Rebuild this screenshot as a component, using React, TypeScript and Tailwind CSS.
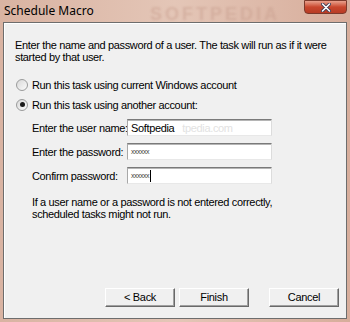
import React from 'react'

const Radio = ({ checked }: { checked?: boolean }) => (
    <span className="relative inline-flex items-center justify-center w-[12px] h-[12px] rounded-full border border-[#9a9b9b] bg-gradient-to-br from-[#d8d8d8] to-[#fbfbfb]">
        {checked && <span className="w-[5px] h-[5px] rounded-full bg-[#1a1a1a]" />}
    </span>
)

const Field = ({ label, children }: { label: string; children: React.ReactNode }) => (
    <div className="flex items-center h-[17px]">
        <span className="w-[95px] shrink-0 whitespace-nowrap">{label}</span>
        <div className="w-[145px] h-[17px] bg-white border border-t-[#7a7a7a] border-l-[#a8a8a8] border-r-[#dcdcdc] border-b-[#e8e8e8] shadow-[inset_0_1px_0_#b5b5b5] flex items-center px-[3px] overflow-hidden">
            {children}
        </div>
    </div>
)

const Btn = ({ children }: { children: React.ReactNode }) => (
    <button className="w-[70px] h-[19px] bg-[#f0f0f0] border border-t-white border-l-white border-r-[#696969] border-b-[#696969] shadow-[inset_-1px_-1px_0_#a0a0a0] text-[11px] leading-none text-black tracking-[-0.3px]">
        {children}
    </button>
)

export default function App() {
    return (
        <div
            className="w-[350px] h-[322px] overflow-hidden bg-gradient-to-r from-[#d9b3a2] via-[#e4c6b7] to-[#d7ad9b] flex flex-col"
            style={{ fontFamily: '"Liberation Sans", Arial, sans-serif' }}
        >
            {/* Title bar */}
            <div className="relative h-[22px] shrink-0 flex items-center pl-[4px]">
                <span className="text-[12px] text-black" style={{ fontFamily: '"Noto Sans", "Open Sans", sans-serif' }}>
                    Schedule Macro
                </span>
                <span className="absolute left-[150px] top-[1px] text-[18px] font-bold tracking-[3px] text-[#c9a090]/50 blur-[1px]">
                    SOFTPEDIA
                </span>
                <div className="absolute right-[3px] top-0 w-[43px] h-[14px] rounded-b-[4px] border border-[#7c3a2c] bg-gradient-to-b from-[#e8a08c] via-[#c9472e] to-[#b83c25] flex items-center justify-center">
                    <svg width="10" height="9" viewBox="0 0 10 9">
                        <path d="M1.5 1 L8.5 8 M8.5 1 L1.5 8" stroke="#3b3b55" strokeWidth="3.2" strokeLinecap="round" />
                        <path d="M1.5 1 L8.5 8 M8.5 1 L1.5 8" stroke="#ffffff" strokeWidth="1.6" strokeLinecap="round" />
                    </svg>
                </div>
            </div>

            {/* Client area */}
            <div className="mx-[3px] h-[297px] bg-[#f0f0f0] border border-[#6d6d6d] shadow-[inset_1px_1px_0_#ffffff] flex flex-col text-[11px] leading-[12px] tracking-[-0.35px] text-black pl-[11px]">
                <p className="mt-[16px] pr-[6px]">
                    Enter the name and password of a user. The task will run as if it were started by that user.
                </p>

                <div className="mt-[15px] flex items-center gap-[4px] pl-[1px] h-[13px]">
                    <Radio />
                    <span>Run this task using current Windows account</span>
                </div>
                <div className="mt-[7px] flex items-center gap-[4px] pl-[1px] h-[13px]">
                    <Radio checked />
                    <span>Run this task using another account:</span>
                </div>

                <div className="mt-[8px] pl-[17px] flex flex-col gap-[7px]">
                    <Field label="Enter the user name:">
                        <span>Softpedia</span>
                        <span className="ml-[8px] text-[#e2e2e2] whitespace-nowrap">tpedia.com</span>
                    </Field>
                    <Field label="Enter the password:">
                        <span className="text-[7px] tracking-[-0.5px] text-[#444]">xxxxxx</span>
                    </Field>
                    <Field label="Confirm password:">
                        <span className="text-[7px] tracking-[-0.5px] text-[#444]">xxxxxx</span>
                        <span className="w-px h-[12px] bg-black ml-[1px]" />
                    </Field>
                </div>

                <p className="mt-[12px] pl-[17px]">
                    If a user name or a password is not entered correctly,
                    <br />
                    scheduled tasks might not run.
                </p>

                <div className="mt-auto mb-[11px] flex items-center pl-[90px] gap-[4px]">
                    <Btn>&lt; Back</Btn>
                    <Btn>Finish</Btn>
                    <div className="w-[12px]" />
                    <Btn>Cancel</Btn>
                </div>
            </div>
        </div>
    )
}
